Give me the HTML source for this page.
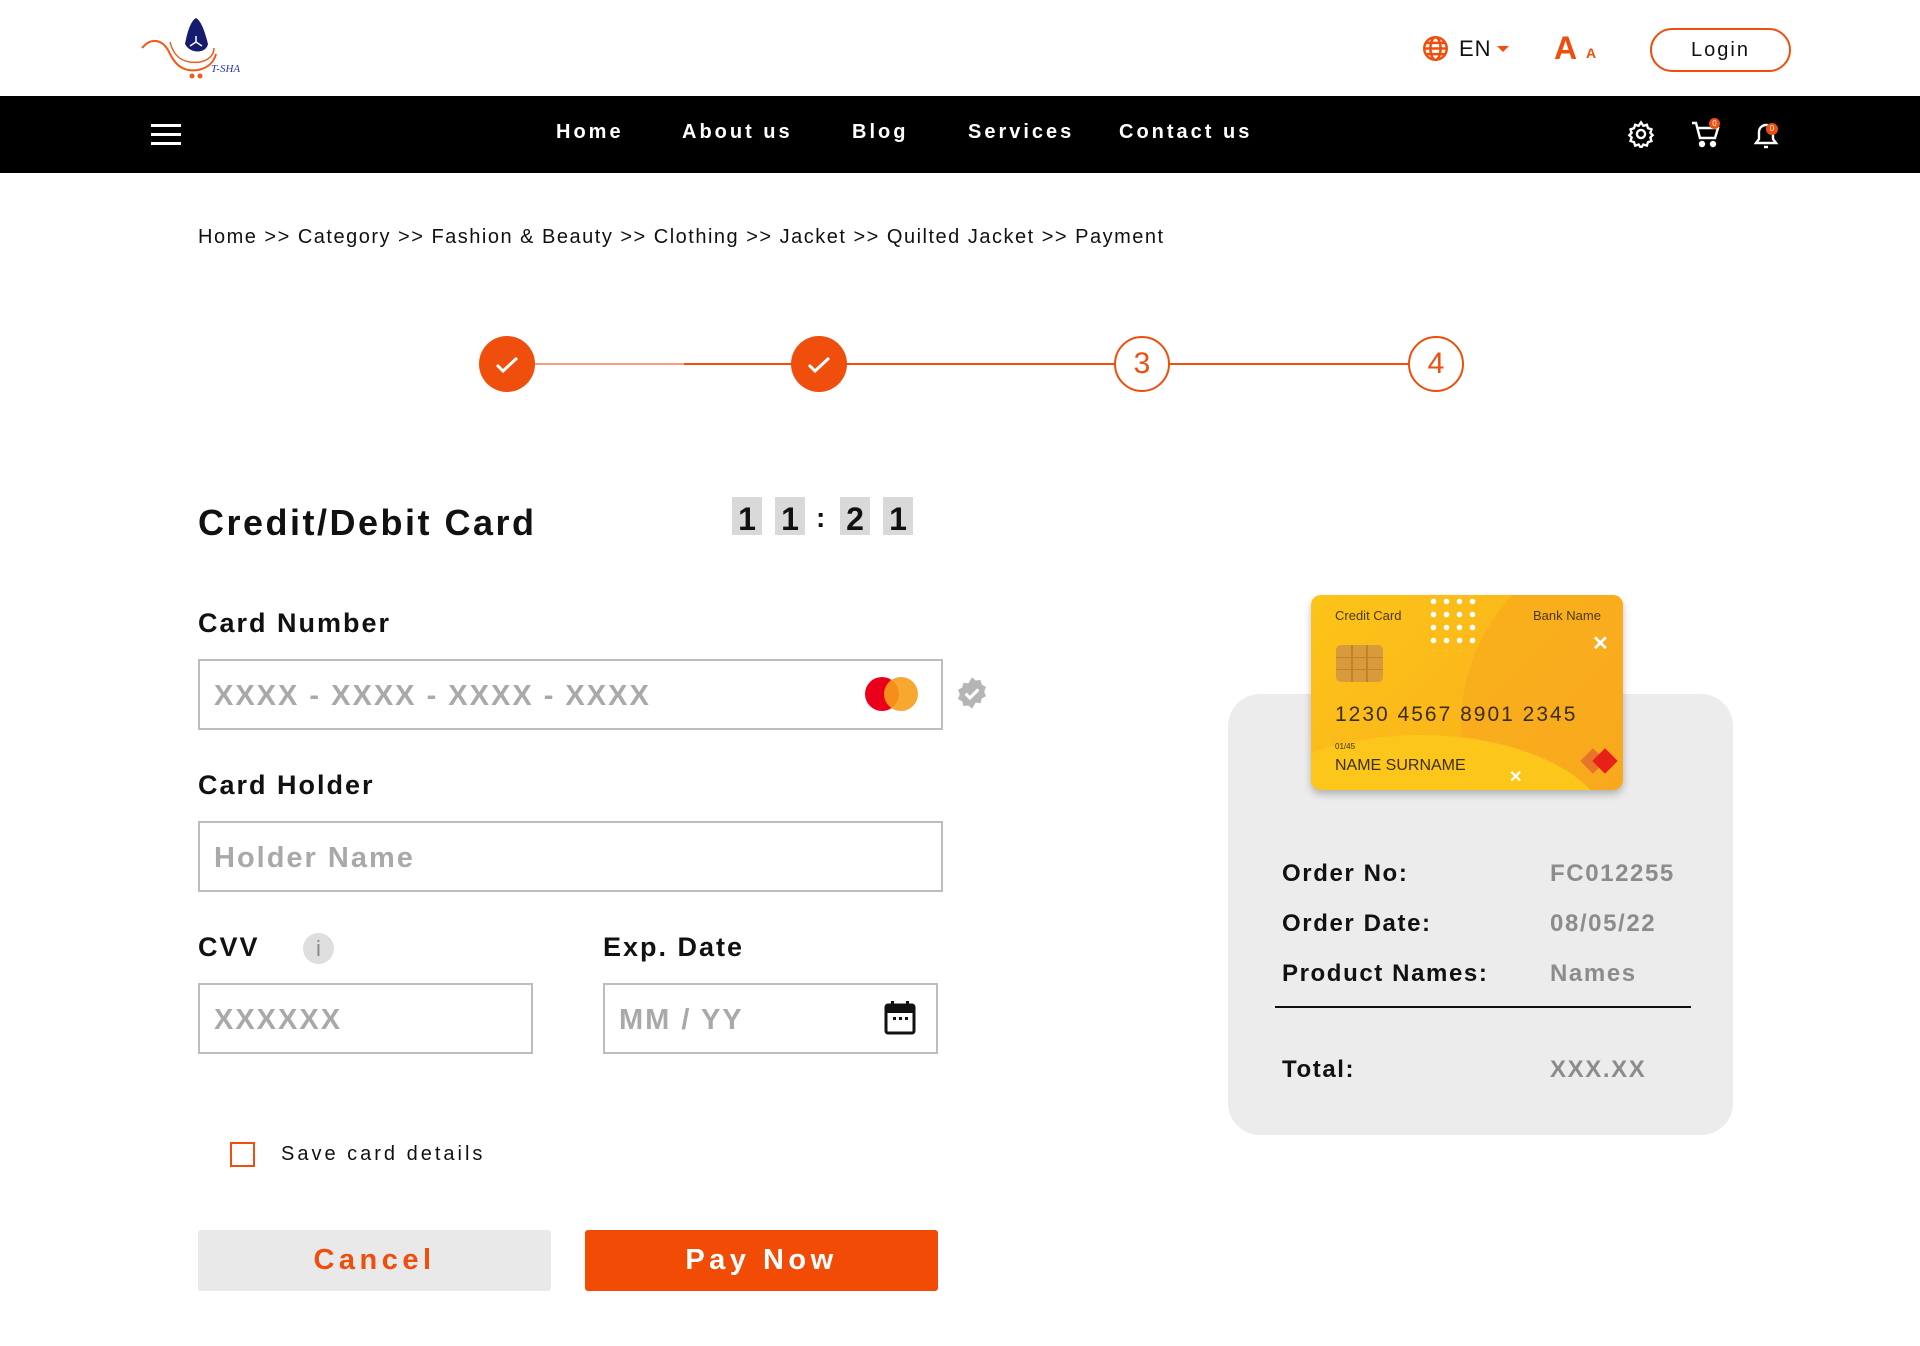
<!DOCTYPE html>
<html><head><meta charset="utf-8"><style>
*{margin:0;padding:0;box-sizing:border-box}
body{width:1920px;height:1346px;position:relative;background:#fff;font-family:"Liberation Sans",Arial,sans-serif;color:#111;overflow:hidden}
.a{position:absolute}
.nav{top:96px;left:0;width:1920px;height:77px;background:#000}
.nl{color:#fff;font-size:20px;letter-spacing:3px;top:121px;font-weight:bold}
.lbl{font-size:27px;font-weight:bold;letter-spacing:2px;left:198px}
.inp{border:2px solid #bdbdbd;background:#fff}
.ph{color:#a9a9a9;font-size:29px;letter-spacing:2px;font-weight:600}
.tb{background:#d9d9d9;width:30px;height:38px;top:497px;font-size:32px;font-weight:bold;text-align:center;line-height:44px;overflow:hidden}
.step{width:56px;height:56px;border-radius:50%;top:336px}
.ok{font-size:24px;font-weight:bold;letter-spacing:1.6px;color:#111}
.ov{font-size:24px;font-weight:bold;letter-spacing:1.6px;color:#8c8c8c;left:1550px}
</style></head><body>
<svg class="a" style="left:140px;top:14px" width="110" height="66" viewBox="0 0 110 66">
<path d="M2 34 C12 22 24 26 30 40 C36 52 44 58 58 56 C68 54 74 48 76 40" fill="none" stroke="#f05a1a" stroke-width="2"/>
<path d="M30 28 C34 44 44 50 60 48 C70 46 74 40 74 34" fill="none" stroke="#f05a1a" stroke-width="1.5"/>
<path d="M45 30 C48 14 52 6 56 4 C60 6 64 14 68 30 C66 40 50 40 45 30Z" fill="#151b6e"/>
<path d="M56 22 L56 28 M56 28 L50 32 M56 28 L62 32" stroke="#fff" stroke-width="1.5"/>
<circle cx="52" cy="62" r="2.5" fill="#f05a1a"/><circle cx="60" cy="62" r="2.5" fill="#f05a1a"/>
<text x="71" y="58" font-size="11" font-style="italic" fill="#2a35b0" font-family="Liberation Serif,serif">T-SHA</text>
</svg>
<svg class="a" style="left:1422px;top:35px" width="27" height="27" viewBox="0 0 24 24" fill="none" stroke="#f04e0c" stroke-width="2.2"><circle cx="12" cy="12" r="10"/><ellipse cx="12" cy="12" rx="4.5" ry="10"/><path d="M2 12h20M4 7h16M4 17h16"/></svg>
<div class="a" style="left:1459px;top:36px;font-size:22px;letter-spacing:1px">EN</div>
<div class="a" style="left:1497px;top:46px;width:0;height:0;border-left:6px solid transparent;border-right:6px solid transparent;border-top:6px solid #f04e0c"></div>
<div class="a" style="left:1554px;top:30px;font-size:32px;font-weight:bold;color:#f04e0c">A</div>
<div class="a" style="left:1586px;top:45px;font-size:14px;font-weight:bold;color:#f04e0c">A</div>
<div class="a" style="left:1650px;top:28px;width:141px;height:44px;border:2px solid #f04e0c;border-radius:22px;text-align:center;line-height:40px;font-size:20px;letter-spacing:2px">Login</div>
<div class="a nav"></div>
<div class="a" style="left:151px;top:124px;width:30px;height:3px;background:#fff;box-shadow:0 9px 0 #fff,0 18px 0 #fff"></div>
<div class="a nl" style="left:556px">Home</div>
<div class="a nl" style="left:682px">About us</div>
<div class="a nl" style="left:852px">Blog</div>
<div class="a nl" style="left:968px">Services</div>
<div class="a nl" style="left:1119px">Contact us</div>
<svg class="a" style="left:1627px;top:120px" width="28" height="28" viewBox="0 0 24 24" fill="none" stroke="#fff" stroke-width="2"><circle cx="12" cy="12" r="3.5"/><path d="M12 2l2 3 3-1 1 3 3 1-1 3 2 2-2 2 1 3-3 1-1 3-3-1-2 3-2-3-3 1-1-3-3-1 1-3-2-2 2-2-1-3 3-1 1-3 3 1z"/></svg>
<svg class="a" style="left:1691px;top:120px" width="30" height="28" viewBox="0 0 30 28" fill="none" stroke="#fff" stroke-width="2.4"><path d="M1 3h4l4 15h15l3-10H7"/><circle cx="11" cy="24" r="2" fill="#fff"/><circle cx="22" cy="24" r="2" fill="#fff"/></svg>
<div class="a" style="left:1709px;top:118px;width:11px;height:11px;border-radius:50%;background:#f04e0c;color:#fff;font-size:8px;text-align:center;line-height:11px">0</div>
<svg class="a" style="left:1753px;top:120px" width="26" height="30" viewBox="0 0 26 30" fill="none" stroke="#fff" stroke-width="2.4"><path d="M3 23h20l-3-4v-7a7 7 0 0 0-14 0v7z"/><path d="M11 27h4"/></svg>
<div class="a" style="left:1766px;top:123px;width:12px;height:12px;border-radius:50%;background:#f04e0c;color:#fff;font-size:8px;text-align:center;line-height:12px">0</div>
<div class="a" style="left:198px;top:226px;font-size:20px;letter-spacing:1.5px">Home &gt;&gt; Category &gt;&gt; Fashion &amp; Beauty &gt;&gt; Clothing &gt;&gt; Jacket &gt;&gt; Quilted Jacket &gt;&gt; Payment</div>
<div class="a" style="left:534px;top:363px;width:876px;height:2px;background:#f04e0c"></div>
<div class="a" style="left:534px;top:363px;width:150px;height:2px;background:#f7a07a"></div>
<div class="a step" style="left:479px;background:#f04e0c"></div>
<div class="a step" style="left:791px;background:#f04e0c"></div>
<svg class="a" style="left:493px;top:350px" width="28" height="28" viewBox="0 0 28 28"><path d="M4 15l6 6L24 8" fill="none" stroke="#fff" stroke-width="3"/></svg>
<svg class="a" style="left:805px;top:350px" width="28" height="28" viewBox="0 0 28 28"><path d="M4 15l6 6L24 8" fill="none" stroke="#fff" stroke-width="3"/></svg>
<div class="a step" style="left:1114px;border:2px solid #f04e0c;background:#fff;color:#f04e0c;font-size:30px;text-align:center;line-height:52px">3</div>
<div class="a step" style="left:1408px;border:2px solid #f04e0c;background:#fff;color:#f04e0c;font-size:30px;text-align:center;line-height:52px">4</div>
<div class="a" style="left:198px;top:502px;font-size:36px;font-weight:bold;letter-spacing:2.5px">Credit/Debit Card</div>
<div class="a tb" style="left:732px">1</div>
<div class="a tb" style="left:775px">1</div>
<div class="a" style="left:816px;top:502px;font-size:28px;font-weight:bold">:</div>
<div class="a tb" style="left:840px">2</div>
<div class="a tb" style="left:883px">1</div>
<div class="a lbl" style="top:608px">Card Number</div>
<div class="a inp" style="left:198px;top:659px;width:745px;height:71px"></div>
<div class="a ph" style="left:214px;top:680px">XXXX - XXXX - XXXX - XXXX</div>
<div class="a" style="left:865px;top:677px;width:34px;height:34px;border-radius:50%;background:#eb001b"></div>
<div class="a" style="left:884px;top:677px;width:34px;height:34px;border-radius:50%;background:#f79e1b;opacity:.9"></div>
<svg class="a" style="left:954px;top:676px" width="36" height="34" viewBox="0 0 24 24"><path d="M12 1l2.6 2.2 3.4-.4.9 3.3 3 1.7-1.3 3.2 1.3 3.2-3 1.7-.9 3.3-3.4-.4L12 23l-2.6-2.2-3.4.4-.9-3.3-3-1.7L3.4 13 2.1 9.8l3-1.7.9-3.3 3.4.4z" fill="#b5b5b5"/><path d="M7.5 12.5l3 3 6-6" fill="none" stroke="#fff" stroke-width="2.2"/></svg>
<div class="a lbl" style="top:770px">Card Holder</div>
<div class="a inp" style="left:198px;top:821px;width:745px;height:71px"></div>
<div class="a ph" style="left:214px;top:842px">Holder Name</div>
<div class="a lbl" style="top:932px">CVV</div>
<div class="a" style="left:303px;top:933px;width:31px;height:31px;border-radius:50%;background:#dedede;color:#888;font-size:22px;text-align:center;line-height:31px">i</div>
<div class="a lbl" style="left:603px;top:932px">Exp. Date</div>
<div class="a inp" style="left:198px;top:983px;width:335px;height:71px"></div>
<div class="a ph" style="left:214px;top:1004px">XXXXXX</div>
<div class="a inp" style="left:603px;top:983px;width:335px;height:71px"></div>
<div class="a ph" style="left:619px;top:1004px">MM / YY</div>
<svg class="a" style="left:884px;top:1000px" width="32" height="36" viewBox="0 0 32 36"><rect x="2" y="5" width="28" height="28" rx="2" fill="none" stroke="#111" stroke-width="3"/><rect x="2" y="5" width="28" height="8" fill="#111"/><rect x="7" y="1" width="3" height="7" fill="#111"/><rect x="22" y="1" width="3" height="7" fill="#111"/><rect x="9" y="17" width="3" height="3" fill="#111"/><rect x="15" y="17" width="3" height="3" fill="#111"/><rect x="21" y="17" width="3" height="3" fill="#111"/></svg>
<div class="a" style="left:230px;top:1142px;width:25px;height:25px;border:2px solid #f04e0c"></div>
<div class="a" style="left:281px;top:1143px;font-size:20px;letter-spacing:3px">Save card details</div>
<div class="a" style="left:198px;top:1230px;width:353px;height:61px;background:#e9e9e9;border-radius:3px;color:#f04e0c;font-size:29px;font-weight:bold;letter-spacing:4.5px;text-align:center;line-height:61px">Cancel</div>
<div class="a" style="left:585px;top:1230px;width:353px;height:61px;background:#f24b06;border-radius:3px;color:#fff;font-size:29px;font-weight:bold;letter-spacing:4.5px;text-align:center;line-height:61px">Pay Now</div>
<div class="a" style="left:1228px;top:694px;width:505px;height:441px;background:#ececec;border-radius:32px"></div>
<div class="a" style="left:1311px;top:595px;width:312px;height:195px;border-radius:10px;overflow:hidden;background:linear-gradient(135deg,#fcc419 0%,#fbb81a 50%,#f9a51e 100%);box-shadow:0 4px 8px rgba(0,0,0,.25)">
<div class="a" style="left:150px;top:-60px;width:380px;height:380px;border-radius:50%;background:#f8a91e;opacity:.7"></div>
<div class="a" style="left:-80px;top:140px;width:380px;height:200px;border-radius:50%;background:#fcc61a"></div>
<div class="a" style="left:24px;top:13px;font-size:13px;color:#4a3a10">Credit Card</div>
<div class="a" style="left:222px;top:13px;font-size:13px;color:#4a3a10">Bank Name</div>
<div class="a" style="left:116px;top:0;width:50px;height:56px;background:radial-gradient(circle,#fff 2.5px,transparent 3px) 0 0/13px 13px"></div>
<div class="a" style="left:25px;top:50px;width:47px;height:37px;border-radius:5px;background:#d89a3a;background-image:linear-gradient(90deg,transparent 15px,#c0822a 15px,#c0822a 17px,transparent 17px,transparent 30px,#c0822a 30px,#c0822a 32px,transparent 32px),linear-gradient(0deg,transparent 12px,#c0822a 12px,#c0822a 13px,transparent 13px,transparent 24px,#c0822a 24px,#c0822a 25px,transparent 25px)"></div>
<div class="a" style="left:281px;top:36px;color:#fff;font-size:20px;font-weight:bold">✕</div>
<div class="a" style="left:24px;top:108px;font-size:21px;letter-spacing:2px;color:#3a2e10">1230 4567 8901 2345</div>
<div class="a" style="left:24px;top:147px;font-size:8px;color:#3a2e10">01/45</div>
<div class="a" style="left:24px;top:162px;font-size:16px;color:#3a2e10">NAME SURNAME</div>
<div class="a" style="left:198px;top:172px;color:#fff;font-size:16px;font-weight:bold">✕</div>
<div class="a" style="left:273px;top:157px;width:18px;height:18px;background:#e8742a;transform:rotate(45deg)"></div>
<div class="a" style="left:285px;top:157px;width:18px;height:18px;background:#e8201a;transform:rotate(45deg)"></div>
</div>
<div class="a ok" style="left:1282px;top:860px">Order No:</div><div class="a ov" style="top:860px">FC012255</div>
<div class="a ok" style="left:1282px;top:910px">Order Date:</div><div class="a ov" style="top:910px">08/05/22</div>
<div class="a ok" style="left:1282px;top:960px">Product Names:</div><div class="a ov" style="top:960px">Names</div>
<div class="a" style="left:1275px;top:1006px;width:416px;height:1.5px;background:#111"></div>
<div class="a ok" style="left:1282px;top:1056px">Total:</div><div class="a ov" style="top:1056px">XXX.XX</div>
</body></html>
